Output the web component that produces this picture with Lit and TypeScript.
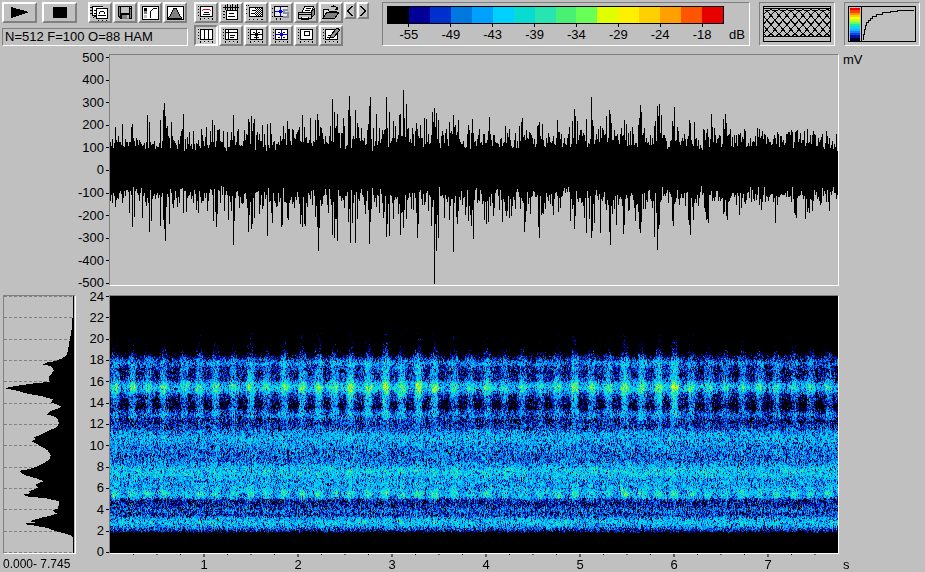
import { LitElement, html, svg, css } from "lit";
import { customElement, property, query } from "lit/decorators.js";

const DURATION = 7.745;
const COLUMNS = 728;
const PALETTE = [
  "#000000", "#000098", "#0030cc", "#0078e0", "#00a0ff", "#00d0ff", "#08dcd0", "#28e4b0",
  "#48f074", "#68ff58", "#e0ff00", "#fff000", "#ffd000", "#ffa000", "#ff5400", "#e80000",
];

// Repeatable noise, so that every render shows the same recording.
function noise(seed: number) {
  let s = seed;
  return () => {
    s = (s + 0x6d2b79f5) | 0;
    let t = Math.imul(s ^ (s >>> 15), 1 | s);
    t = (t + Math.imul(t ^ (t >>> 7), 61 | t)) ^ t;
    return ((t ^ (t >>> 14)) >>> 0) / 4294967296;
  };
}

function lerp(stops: number[][], at: number, field: number) {
  for (let i = 1; i < stops.length; i++) {
    if (at <= stops[i][0]) {
      const [a, b] = [stops[i - 1], stops[i]];
      return a[field] + ((at - a[0]) / (b[0] - a[0])) * (b[field] - a[field]);
    }
  }
  return stops[stops.length - 1][field];
}

// Peaks of the recording in three blocks: first column of the block, then
// pairs of position and height, both counted in thirds of a plot cell.
const PEAKS_UP: [number, number[]][] = [
  [-35, [121,232,142,222,173,222,217,195,223,218,257,210,265,180,268,159,271,200,290,216,325,192,379,237,
    433,238,457,247,474,195,530,198,538,207,563,225,578,222,587,219,626,230,683,195,687,232,707,204,
    727,192,730,210,767,228,773,147,778,188,787,192,805,204,820,180,823,138,827,200]],
  [240, [1,200,16,180,22,220,34,234,58,170,61,141,79,192,88,234,97,240,109,141,118,186,151,192,160,120,
    163,205,169,162,175,234,202,238,211,225,223,204,229,207,250,216,253,174,259,190,265,210,289,237,
    298,216,310,195,325,210,358,240,367,207,403,252,467,230,478,237,538,246,565,225,568,216,625,246,
    655,252,673,177,676,198,710,207,724,141,727,210,751,228,757,234,778,180,781,194,793,240]],
  [510, [13,210,19,222,58,205,61,165,64,186,91,255,103,228,112,168,115,200,118,162,124,195,157,213,160,228,163,171,
    208,210,211,220,262,237,298,255,325,255,355,252,421,264,463,255,475,252,502,252,526,247,532,240,
    562,237,571,255,619,243]],
];
const PEAKS_DOWN: [number, number[]][] = [
  [-35, [121,470,142,458,173,530,177,498,202,503,223,543,229,510,257,525,265,508,268,534,271,570,284,520,325,488,
    371,488,415,512,424,530,460,508,475,582,479,510,530,536,538,503,577,557,592,518,620,530,640,508,
    683,530,687,520,727,530,730,602,773,553,778,563,787,570,820,515,826,578]],
  [240, [1,578,16,576,22,505,58,581,61,515,88,488,109,560,112,520,118,557,130,505,151,554,154,488,160,533,169,505,
    184,476,202,563,205,520,235,482,253,702,259,600,265,563,283,503,298,508,310,605,325,482,364,527,
    370,566,409,521,430,497,469,497,478,502,526,515,565,530,568,563,610,494,661,512,673,536,710,548,
    724,562,727,542,751,546,778,545,781,584,787,490,799,524,820,551,823,523]],
  [510, [10,551,13,524,46,512,58,536,61,548,64,515,103,560,112,597,115,536,118,524,157,512,160,527,208,522,
    211,554,262,506,310,490,364,473,424,479,466,518,523,488,556,506,568,488,628,482]],
];

function waveform() {
  const rnd = noise(11);
  const up: number[] = [];
  const down: number[] = [];
  let swell = 0;
  for (let x = 0; x < COLUMNS; x++) {
    const loud = x > 620 ? 0.75 : x < 50 ? 0.7 : 1;
    const near = PULSES.some((at) => Math.abs(at - x) < 4) ? 1.5 : 1;
    swell = 0.85 * swell + (rnd() - 0.5) * 3;
    up.push(Math.max(15, 21 + swell + loud * near * (9 * rnd() + 17 * rnd() ** 2.5)));
    down.push(Math.max(14, 17 + swell + loud * near * (11 * rnd() + 19 * rnd() ** 2.5)));
  }
  const apply = (blocks: [number, number[]][], out: number[]) => {
    for (const [start, list] of blocks)
      for (let i = 0; i < list.length; i += 2) {
        const x = Math.floor(start + list[i] / 3);
        if (x >= 0 && x < COLUMNS) out[x] = Math.min(113, Math.abs(361 - list[i + 1]) / 3);
      }
  };
  apply(PEAKS_UP, up);
  apply(PEAKS_DOWN, down);
  return up.map((u, x) => `M${x} ${Math.round(115 - u)}h1V${Math.round(116 + down[x])}h-1z`).join("");
}

// kHz, level between pulses, extra level inside a pulse (in palette steps).
const BANDS = [
  [0, -9, 0], [1.7, -6, 0], [1.9, 0, 0], [2.2, 2.2, 0], [2.5, 3.9, 0.2], [2.8, 4.6, 0.3], [3.2, 3.6, 0.2],
  [3.5, 1.5, 0.3], [3.9, 2.4, 0.3], [4.3, 1.5, 0.2], [4.7, 0.9, 0.4], [4.95, 1.3, 1], [5.15, 3.4, 1.8], [5.5, 3.9, 2.8],
  [6, 3.6, 1], [6.8, 3.6, 0.3], [7.3, 4.6, 0.4], [7.7, 4.8, 0.3], [8.1, 3.9, 0], [8.6, 2.5, 0.3],
  [9.3, 2.6, 0.2], [10, 3.3, 0.2], [10.7, 4.1, 0.2], [11.3, 3.2, 0.2], [11.7, 1.6, 0.7], [12.3, 0.9, 1.3],
  [12.9, 2.6, 1.8], [13.3, 1.2, 2.8], [13.6, -0.8, 4], [14.2, 0.3, 3.5], [14.7, 1.4, 3.2], [15.1, 3.5, 3.1],
  [15.5, 4.7, 3.5], [15.9, 3.4, 2.7], [16.2, 1.4, 2.9], [16.9, 0.7, 2.9], [17.4, 1.5, 2.4], [17.7, 3, 1.5],
  [18, 2.2, 1.2], [18.3, 0.2, 1.8], [18.6, -2, 2.8], [19.2, -4, 2.8], [20.5, -5, 2.8], [21.5, -9, 0], [24, -9, 0],
];
const PULSES = [
  5, 22, 38, 53, 74, 89, 105, 123, 140, 156, 174, 192, 208, 224, 240, 258, 275, 291, 308, 324, 344, 360, 377,
  394, 412, 430, 447, 464, 481, 498, 514, 531, 548, 564, 581, 598, 615, 632, 649, 666, 684, 700, 718,
];
const GAIN = [
  [0, 0.8], [60, 0.9], [130, 0.9], [200, 1], [230, 1.2], [300, 1.15], [350, 0.9], [420, 0.8], [480, 1],
  [560, 1.2], [590, 0.85], [640, 0.7], [728, 0.7],
];

// Row in thirds of a pixel, left edge of the power profile in thirds.
const PROFILE = [
  [34,220],[95,219],[100,217],[130,215],[160,210],[195,204],[210,200],[220,185],[228,165],[232,140],[238,130],
  [242,150],[250,158],[256,162],[265,155],[275,145],[283,147],[290,150],[295,100],[302,50],[308,20],[311,18],
  [315,45],[325,80],[333,125],[343,160],[348,155],[352,153],[358,172],[364,182],[370,175],[378,150],[388,142],
  [395,165],[405,175],[415,176],[425,172],[435,150],[445,130],[452,115],[456,102],[462,108],[468,94],[475,108],
  [485,125],[495,143],[510,152],[522,150],[535,130],[545,108],[552,85],[557,58],[562,62],[570,75],[580,110],
  [588,130],[595,115],[600,105],[606,115],[612,105],[618,85],[624,92],[629,68],[634,85],[640,140],[648,176],
  [660,177],[670,173],[676,158],[680,163],[685,170],[692,150],[697,127],[703,105],[708,88],[712,105],[716,68],
  [720,95],[728,140],[735,160],[740,175],[745,195],[752,215],[758,220],[804,220],
];

function profile() {
  let d = "";
  for (let y = 0; y < 257; y++) {
    const left = Math.round(lerp(PROFILE, 34 + y * 3, 1) / 3) - 4;
    d += `M${left} ${y}h${70 - left}v1h${left - 70}z`;
  }
  return d;
}

const frame = (inner: unknown) => svg`
  <path d="M4 3h13v10H4z" fill="#fff"/>
  <path d="M4 2h13v1H4zM4 12h13v1H4zM4 3h1v9H4zM16 3h1v9h-1zM2 2h1v1H2zM2 5h1v1H2zM2 8h1v1H2zM2 11h1v1H2zM4 14h1v2H4zM8 14h1v1H8zM12 14h1v1h-1zM16 14h1v2h-1z"/>
  ${inner}`;

const ICONS: Record<string, unknown> = {
  play: svg`<path d="M7 3l18 5-18 6z"/>`,
  stop: svg`<path d="M9 3h14v11H9z"/>`,
  copy: svg`<path d="M2 2h11v10H2z" fill="#fff"/><path d="M2 2h11v1H2zM2 2h1v10H2zM2 11h4v1H2zM0 3h2v1H0zM0 6h2v1H0zM0 9h2v1H0zM3 13h1v1H3z"/>
    <path d="M6 5h11v10H6z" fill="#fff"/><path d="M6 4h12v1H6zM6 14h12v1H6zM6 4h1v10H6zM17 4h1v10h-1zM4 6h2v1H4zM4 9h2v1H4zM4 12h2v1H4zM8 16h1v1H8zM12 16h1v1h-1zM16 16h1v1h-1zM10 7h4v1h-4zM9 8h1v2H9zM14 8h1v2h-1zM8 11h8v1H8z"/>`,
  save: svg`<path d="M3 2h14v13H5l-2-2z"/><path d="M6 3h8v6H6z" fill="#c0c0c0"/><path d="M4 3h1v9H4zM15 5h1v9h-1z" fill="#808080"/><path d="M7 11h7v4H7z" fill="#808080"/><path d="M12 11h2v3h-2zM15 3h1v1h-1z" fill="#c0c0c0"/>`,
  levels: svg`<path d="M2 2h16v13H2z" fill="#fff" stroke="#000"/><path d="M4 4h3v3H4z"/><path d="M4 7h3v3H4z" fill="#808080"/><path d="M4 11h3v3H4z" fill="#c0c0c0"/><path d="M10 14v-3c0-4 1-6 7-7" fill="none" stroke="#000"/>`,
  bell: svg`<path d="M2 2h16v13H2z" fill="#fff" stroke="#000"/><path d="M3 14c4-2 4-10 7-10s3 8 7 10z" fill="#808080" stroke="#000"/>`,
  peak: frame(svg`<path d="M7 5h7v1H7zM6 6h1v1H6zM14 6h1v1h-1z" fill="#e00020"/><path d="M8 8h5v1H8zM7 10h7v1H7z"/>`),
  timeline: svg`<path d="M2 3h16v1H2zM4 1h1v5H4zM6 0h1v6H6zM9 1h1v5H9zM11 0h1v6h-1zM14 1h1v5h-1zM16 0h1v6h-1z"/>
    <path d="M5 7h12v9H5z" fill="#fff"/><path d="M5 6h12v1H5zM5 15h12v1H5zM5 6h1v9H5zM16 6h1v9h-1zM2 7h2v1H2zM2 10h2v1H2zM2 13h2v1H2zM8 9h5v1H8zM7 12h7v1H7z"/>`,
  pattern: svg`<path d="M4 3h12v10H4z" fill="#fff"/><path d="M3 3h14v1H3zM3 12h14v1H3zM3 3h1v9H3zM16 3h1v9h-1zM0 1h1v1H0zM2 1h1v1H2zM0 5h1v1H0zM0 9h1v1H0zM3 15h1v1H3zM7 15h1v1H7zM11 15h1v1h-1zM15 15h2v1h-2zM6 6h3v1H6zM5 9h4v1H5z"/>
    <path d="M9 4.500h7M9 6.500h7M9 8.500h7M9 10.500h7" stroke="#000" stroke-dasharray="1 1"/><path d="M10 5.500h6M10 7.500h6M10 9.500h6M10 11.500h6" stroke="#000" stroke-dasharray="1 1"/>`,
  overlay: svg`<path d="M4 3h12v9H4z" fill="#e8e8e8"/><path d="M3 2h14v1H3zM3 12h9v1H3zM3 2h1v10H3zM9 2h1v11H9zM1 4h1v1H1zM1 8h1v1H1zM1 12h1v1H1zM5 14h1v2H5zM9 14h1v2H9z"/><path d="M4 7h9v1H4zM9 3h1v9H9zM8 6h3v3H8z" fill="#0000e0"/><path d="M17 6h-4v3h4v4h-5" fill="none" stroke="#8890a0" stroke-width="2"/>`,
  print: svg`<path d="M6 8l3-6h9l-3 6z" fill="#fff" stroke="#000"/><path d="M10 4h5v1h-5zM9 6h5v1H9z"/><path d="M2 8h13v6H2z" fill="#c0c0c0" stroke="#000"/><path d="M15 8l3-3v6l-3 3z" fill="#808080" stroke="#000"/><path d="M2 10h13v1H2zM5 13h8v3H5z"/><path d="M6 13h6v1H6z" fill="#fff"/>`,
  open: svg`<path d="M2 14V5h5l1 2h7v2" fill="#e0e0e0" stroke="#000"/><path d="M2 14l4-6h12l-4 6z" fill="#808080" stroke="#000"/><path d="M10 3c2-2 4-1 6 1" fill="none" stroke="#000"/><path d="M17 2v4h-4z"/>`,
  columns: frame(svg`<path d="M8 3h1v9H8zM12 3h1v9h-1z"/>`),
  rows: frame(svg`<path d="M4 5h13v1H4zM7 3h1v9H7zM9 8h5v1H9zM9 10h4v1H9z"/>`),
  cross: frame(svg`<path d="M4 7h13v1H4zM10 3h1v9h-1zM9 6h3v3H9zM7 5h2v1H7zM12 5h2v1h-2zM8 10h5v1H8z"/>`),
  crossBlue: frame(svg`<path d="M7 5h2v1H7zM12 5h2v1h-2zM7 10h2v1H7zM12 10h2v1h-2z"/><path d="M4 7h13v1H4zM10 3h1v9h-1zM9 6h3v3H9z" fill="#0000e0"/>`),
  box: frame(svg`<path d="M8 4h6v5H8z"/><path d="M9 5h4v3H9z" fill="#fff"/>`),
  edit: frame(svg`<path d="M7 8h3v1H7zM6 10h5v1H6z"/><path d="M10 8l6-7 3 2-6 7-4 1z" fill="#909090" stroke="#000"/>`),
  prev: svg`<path d="M6 2L2 7l4 5" fill="none" stroke="#000" stroke-width="1.500"/>`,
  next: svg`<path d="M2 2l4 5-4 5" fill="none" stroke="#000" stroke-width="1.500"/>`,
};

@customElement("tool-button")
class ToolButton extends LitElement {
  @property() icon = "";
  @property() label = "";
  @property() kind = "tool";
  @property({ type: Boolean }) pressed = false;
  static styles = css`
    :host { display: block; }
    button {
      display: block; box-sizing: border-box; width: 24px; height: 21px; padding: 0;
      background: #c0c0c0; border: 2px solid; border-color: #fff #808080 #808080 #fff; border-radius: 0;
    }
    button.wide { width: 35px; }
    button.small { width: 12px; height: 17px; }
    button[aria-pressed="true"] { background: #cacaca; border-color: #808080 #fff #fff #808080; }
    svg { display: block; shape-rendering: crispEdges; }
  `;
  render() {
    const [w, h] = this.kind === "wide" ? [31, 17] : this.kind === "small" ? [8, 13] : [20, 17];
    return html`<button class=${this.kind} type="button" aria-label=${this.label} aria-pressed=${this.pressed ? "true" : "false"}>
      <svg width=${w} height=${h} viewBox="0 0 ${w} ${h}" aria-hidden="true">${ICONS[this.icon]}</svg>
    </button>`;
  }
}

@customElement("spectrogram-view")
class SpectrogramView extends LitElement {
  @query("canvas") canvas!: HTMLCanvasElement;
  static styles = css`
    :host { display: block; min-width: 0; }
    canvas { display: block; width: 100%; height: 257px; image-rendering: pixelated; }
  `;
  firstUpdated() {
    const ctx = this.canvas.getContext("2d")!;
    const image = ctx.createImageData(COLUMNS, 257);
    const rnd = noise(5);
    const rgb = PALETTE.map((c) => [1, 3, 5].map((i) => parseInt(c.slice(i, i + 2), 16)));
    const strength = PULSES.map(() => 0.7 + rnd() * 0.5);
    const pulse: number[] = [];
    const gain: number[] = [];
    for (let x = 0; x < COLUMNS; x++) {
      let p = 0;
      PULSES.forEach((at, i) => (p += strength[i] * Math.exp(-(((x - at) / 4) ** 4))));
      pulse.push(p);
      gain.push(lerp(GAIN, x, 1));
    }
    let above = new Array(COLUMNS).fill(0);
    for (let y = 0; y < 257; y++) {
      const khz = ((256 - y) / 256) * 24;
      const base = lerp(BANDS, khz, 1);
      const extra = lerp(BANDS, khz, 2);
      const high = khz > 12 && khz < 18.3;
      const row: number[] = [];
      for (let x = 0; x < COLUMNS; x++) {
        const fresh = Math.log(-Math.log(1 - rnd() * 0.9999) + 0.03) + 0.5;
        const grain = 0.3 * above[x] + 0.95 * fresh;
        row.push(grain);
        const fade = high ? (gain[x] - 1) * 2 : 0;
        const level = base + fade + extra * pulse[x] * gain[x] + grain * 1.5;
        const c = rgb[Math.max(0, Math.min(10, Math.round(level)))];
        const o = (y * COLUMNS + x) * 4;
        image.data[o] = c[0];
        image.data[o + 1] = c[1];
        image.data[o + 2] = c[2];
        image.data[o + 3] = 255;
      }
      above = row;
    }
    ctx.putImageData(image, 0, 0);
  }
  render() {
    return html`<canvas width=${COLUMNS} height="257" role="img" aria-label="Spectrogram"></canvas>`;
  }
}

const tool = (icon: string, label: string, kind = "tool", pressed = false) =>
  html`<tool-button .icon=${icon} .label=${label} .kind=${kind} .pressed=${pressed}></tool-button>`;

@customElement("app-root")
class AppRoot extends LitElement {
  static styles = css`
    :host {
      display: block; min-height: 100vh; background: #c0c0c0; color: #000;
      font: 13px/16px "Liberation Sans", Arial, sans-serif; cursor: default;
    }
    svg { display: block; }
    .toolbar { display: flex; align-items: flex-start; padding: 2px 5px 0 2px; height: 52px; box-sizing: border-box; }
    .transport { display: grid; gap: 5px; width: 186px; margin-right: 6px; }
    .row { display: flex; gap: 1px; }
    .play { margin-right: 4px; }
    .stop { margin-right: 10px; }
    .sunken { border: 1px solid; border-color: #808080 #fff #fff #808080; box-sizing: border-box; }
    .status { height: 18px; padding-left: 2px; white-space: nowrap; }
    .tools { display: grid; grid-template-columns: repeat(6, 24px); gap: 2px 1px; }
    .steps { display: flex; gap: 1px; margin: 0 13px 0 1px; }
    .scale { flex: 1; height: 44px; padding: 3px 4px; display: grid; grid-template-columns: 1fr 21px; align-content: start; }
    .bar { display: flex; height: 18px; border: 1px solid #000; box-sizing: border-box; }
    .bar svg { width: 100%; height: 16px; }
    .marks { grid-column: 1; display: flex; padding: 0 1px; }
    .marks span { flex: 1; display: flex; flex-direction: column; align-items: center; }
    .marks span::before { content: ""; width: 1px; height: 3px; background: #000; }
    .db { grid-column: 2; padding-top: 3px; text-align: right; }
    .mini { width: 76px; height: 44px; padding: 3px; margin-left: 9px; }
    .charts { display: grid; grid-template-columns: 73px 33px 1fr 86px; padding-left: 3px; padding-top: 2px; }
    .wave { grid-column: 3; }
    .wave svg { width: 100%; height: 230px; }
    .axis { display: flex; flex-direction: column; justify-content: space-between; box-sizing: border-box; padding: 3px 0 2px; }
    .axis.first { grid-column: 2; }
    .axis.freq { padding: 1px 0; }
    .axis span { display: flex; height: 1px; align-items: center; justify-content: flex-end; gap: 2px; }
    .axis span::after { content: ""; width: 3px; height: 1px; background: #000; }
    .unit { padding-left: 4px; line-height: 12px; }
    .power, .spec, .axis.freq { margin-top: 9px; height: 259px; }
    .power svg { width: 71px; height: 257px; }
    .range { grid-column: 1 / 3; font-size: 12px; padding-top: 2px; white-space: nowrap; }
    .time svg { width: 100%; height: 3px; }
    .time { padding: 0 1px; }
    .secs { display: flex; height: 15px; }
    .secs span { flex: 1; text-align: center; }
    .secs .start { flex: 0.5; }
    .secs .end { flex: 0.245; }
    .sec { padding: 3px 0 0 4px; height: 15px; }
  `;
  render() {
    const volts = [500, 400, 300, 200, 100, 0, -100, -200, -300, -400, -500];
    const khz = [24, 22, 20, 18, 16, 14, 12, 10, 8, 6, 4, 2, 0];
    const rainbow = ["#f00000", "#ff4000", "#ff9000", "#ffd000", "#ffff00", "#c0ff20", "#60ff60", "#20e8b0", "#10d8e8", "#20b0ff", "#1080ff", "#0848e0", "#0010a0", "#000030"];
    return html`
      <header class="toolbar">
        <div class="transport">
          <div class="row">
            <div class="play">${tool("play", "Play", "wide")}</div>
            <div class="stop">${tool("stop", "Stop", "wide")}</div>
            ${tool("copy", "Copy")}${tool("save", "Save")}${tool("levels", "Levels")}${tool("bell", "Window")}
          </div>
          <div class="status sunken">N=512 F=100 O=88 HAM</div>
        </div>
        <div class="tools">
          ${tool("peak", "Peak")}${tool("timeline", "Timeline")}${tool("pattern", "Select region")}
          ${tool("overlay", "Overlay")}${tool("print", "Print")}${tool("open", "Open")}
          ${tool("columns", "Vertical cursors", "tool", true)}${tool("rows", "Horizontal cursors")}${tool("cross", "Cross cursor")}
          ${tool("crossBlue", "Harmonic cursor")}${tool("box", "Box cursor")}${tool("edit", "Annotate")}
        </div>
        <div class="steps">${tool("prev", "Previous", "small")}${tool("next", "Next", "small")}</div>
        <div class="scale sunken">
          <div class="bar">
            <svg viewBox="0 0 16 1" preserveAspectRatio="none" shape-rendering="crispEdges" aria-hidden="true">
              ${PALETTE.map((c, i) => svg`<rect x=${i} width="1" height="1" fill=${c} />`)}
            </svg>
          </div>
          <div class="marks">${[-55, -49, -43, -39, -34, -29, -24, -18].map((v) => html`<span>${v}</span>`)}</div>
          <div class="db">dB</div>
        </div>
        <div class="mini sunken">
          <svg width="68" height="36" viewBox="0 0 68 36" shape-rendering="crispEdges" role="img" aria-label="Window overlap">
            <rect x="0.500" y="0.500" width="67" height="35" fill="none" stroke="#000" />
            <path d="M1 2.500h66" stroke="#000" />
            ${Array.from({ length: 17 }, (_, i) => i * 8 - 64).map(
              (x) => svg`<path d="M${x} 31c4 0 6-1 9-4L${x + 27} 6c3-3 7-3 10 0L${x + 55} 27c3 3 5 4 9 4" fill="none" stroke="#000"/>`
            )}
          </svg>
        </div>
        <div class="mini sunken">
          <svg width="68" height="36" viewBox="0 0 68 36" shape-rendering="crispEdges" role="img" aria-label="Colour curve">
            <rect x="0.500" y="0.500" width="67" height="35" fill="none" stroke="#000" />
            <path d="M13.500 0v36" stroke="#000" />
            ${rainbow.map((c, i) => svg`<rect x="2" y=${2 + Math.round((i * 32) / 14)} width="10" height="3" fill=${c} />`)}
            <path d="M15.500 34v-6h1v-5h1v-4h1v-3h2v-2h2v-2h2v-2h4v-2h6v-2h8v-1h7v-1h16" fill="none" stroke="#000" />
          </svg>
        </div>
      </header>
      <main class="charts">
        <div class="axis first">${volts.map((v) => html`<span>${v}</span>`)}</div>
        <div class="wave sunken">
          <svg viewBox="0 0 728 230" preserveAspectRatio="none" shape-rendering="crispEdges" role="img" aria-label="Waveform">
            <path d=${waveform()} />
          </svg>
        </div>
        <div class="unit">mV</div>
        <div class="power sunken">
          <svg viewBox="0 0 71 257" shape-rendering="crispEdges" role="img" aria-label="Power spectrum">
            ${khz.map((_, i) => svg`<path d="M0 ${Math.min(256, Math.round((i * 256) / 12)) + 0.5}h70" stroke="#808080" stroke-dasharray="3 2"/>`)}
            <path d=${profile()} />
          </svg>
        </div>
        <div class="axis freq">${khz.map((v) => html`<span>${v}</span>`)}</div>
        <div class="spec sunken"><spectrogram-view></spectrogram-view></div>
        <div></div>
        <div class="range">0.000- 7.745</div>
        <div class="time">
          <svg viewBox="0 0 ${DURATION} 3" preserveAspectRatio="none" shape-rendering="crispEdges" aria-hidden="true">
            ${Array.from({ length: 30 }, (_, i) => i + 1).map(
              (i) => svg`<path d="M${i / 4} 0v${i % 4 ? 1 : 3}" stroke="#000" vector-effect="non-scaling-stroke"/>`
            )}
          </svg>
          <div class="secs">
            <span class="start"></span>${[1, 2, 3, 4, 5, 6, 7].map((v) => html`<span>${v}</span>`)}<span class="end"></span>
          </div>
        </div>
        <div class="sec">s</div>
      </main>`;
  }
}
